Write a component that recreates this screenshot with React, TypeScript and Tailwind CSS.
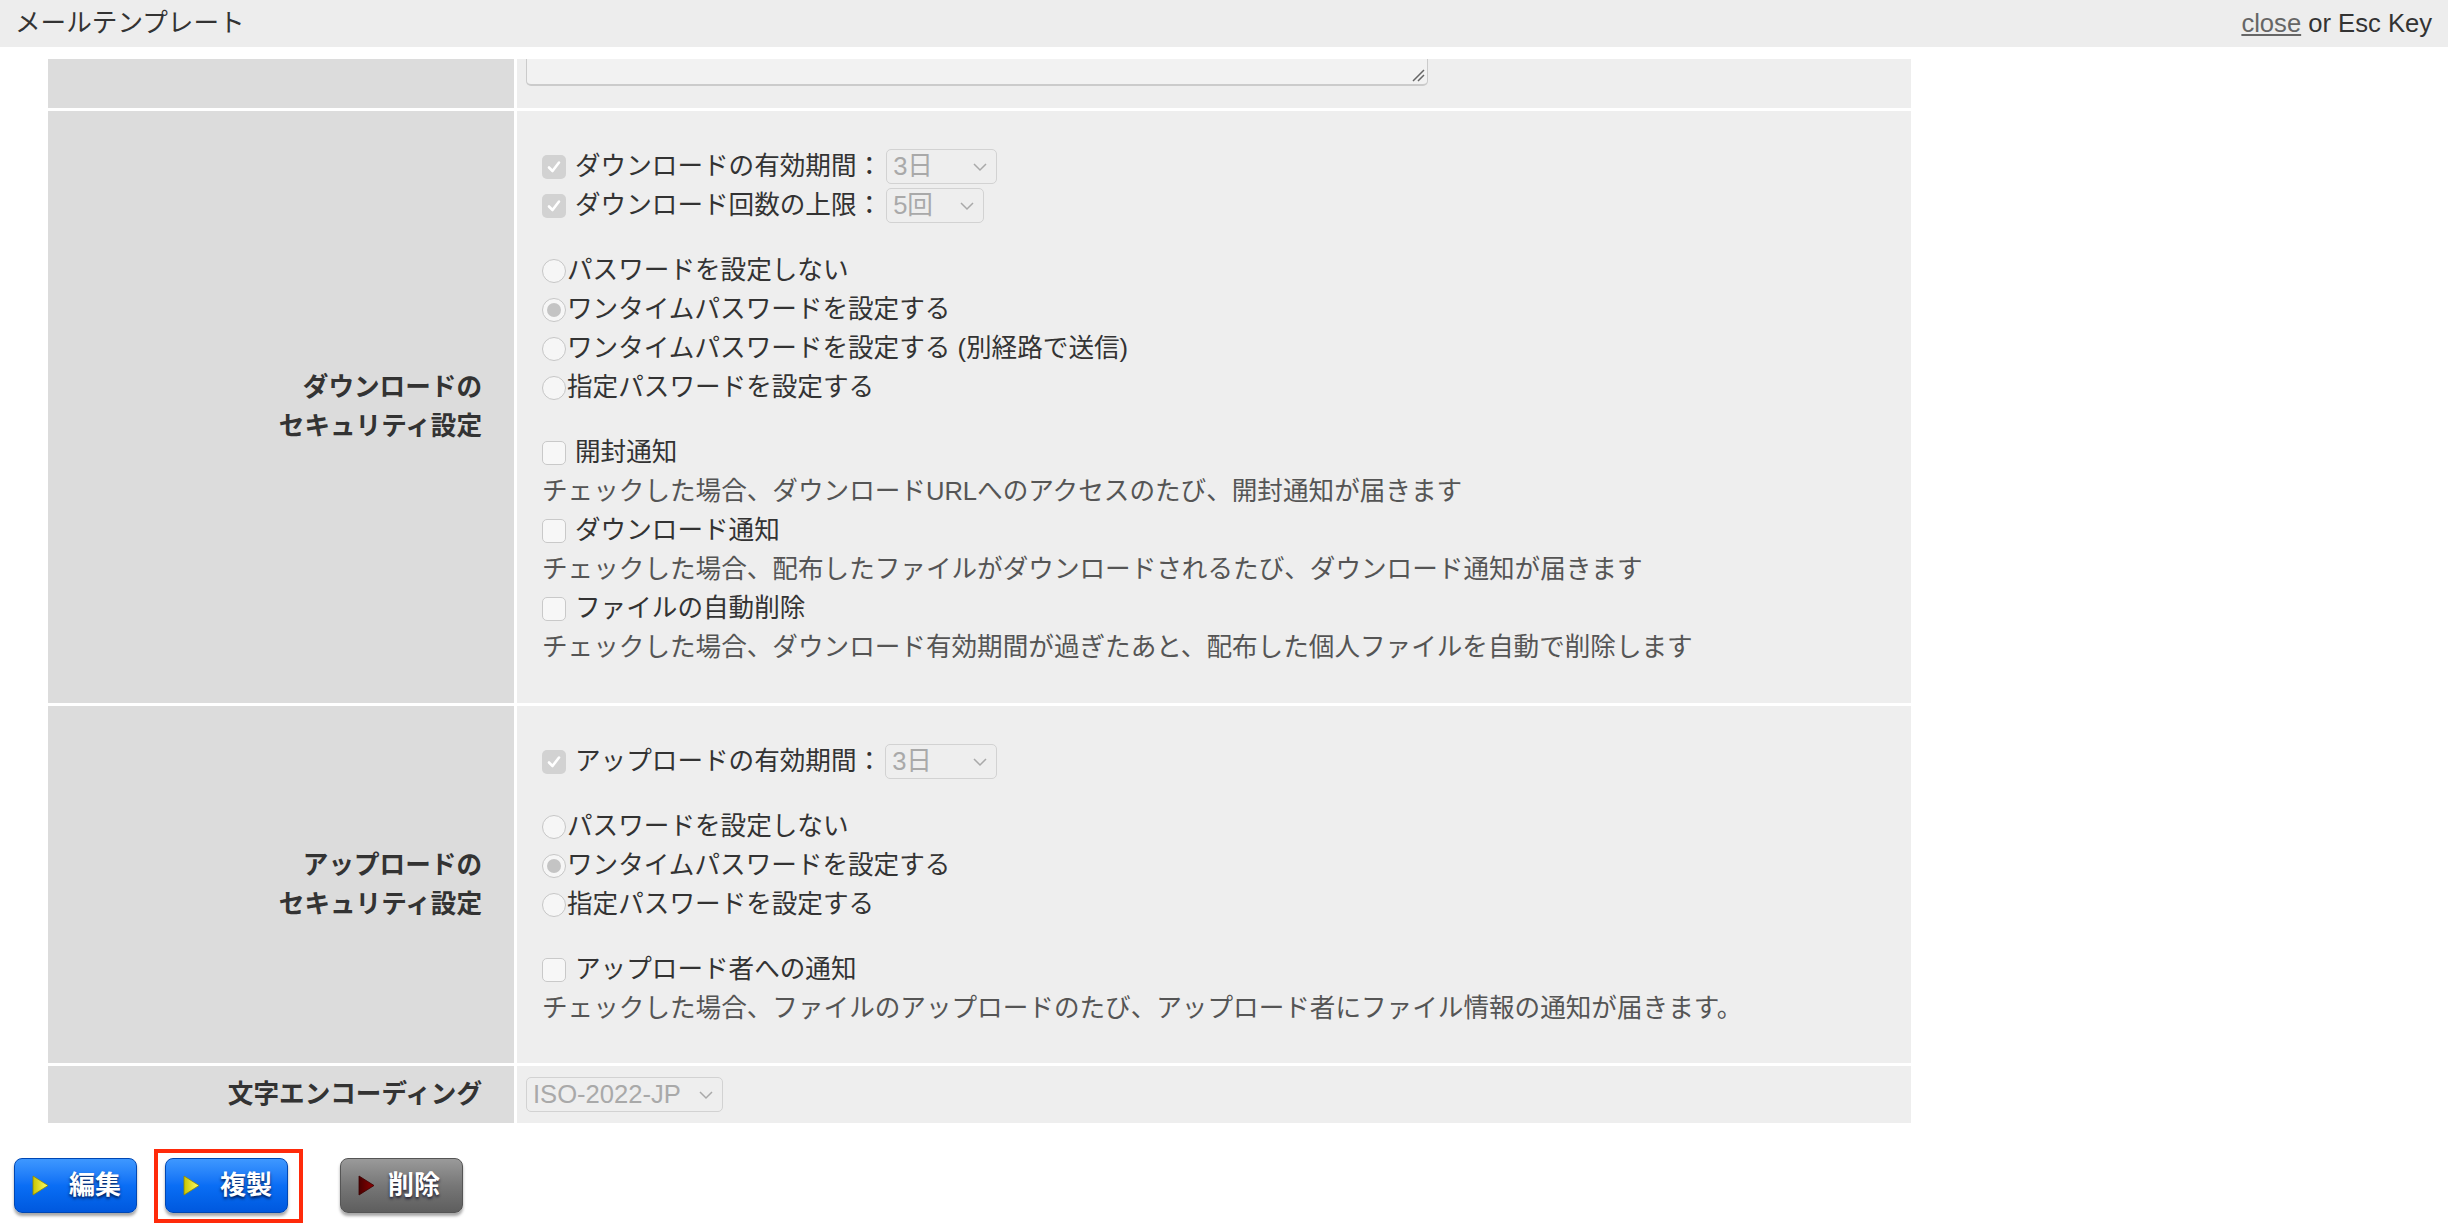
import React from 'react';

const Check = () => (
  <span className="inline-flex w-[24px] h-[24px] mr-[9px] shrink-0 items-center justify-center rounded-[5px] bg-[#d2d2d2]">
    <svg width="16" height="16" viewBox="0 0 16 16">
      <path d="M3 8.5 L6.5 12 L13 3.5" fill="none" stroke="#fff" strokeWidth="2.6" strokeLinecap="round" strokeLinejoin="round" />
    </svg>
  </span>
);

const Box = () => (
  <span className="inline-block w-[24px] h-[24px] mr-[9px] shrink-0 rounded-[5px] border-[1.5px] border-[#c9c9c9] bg-[#f7f7f7]" />
);

const Radio = ({ on }: { on?: boolean }) => (
  <span className="inline-flex w-[24px] h-[24px] mr-[1px] shrink-0 items-center justify-center rounded-full border-[1.5px] border-[#c6c6c6] bg-[#f6f6f6]">
    {on && <span className="w-[14px] h-[14px] rounded-full bg-[#c4c4c4]" />}
  </span>
);

const Select = ({ value, w }: { value: string; w: string }) => (
  <span className={`inline-flex h-[35px] items-center justify-between rounded-[5px] border-[1.5px] border-[#d2d2d2] pl-[6px] pr-[8px] text-[#a9a9a9] ${w}`}>
    <span>{value}</span>
    <svg width="16" height="10" viewBox="0 0 16 10">
      <path d="M2 2 L8 8 L14 2" fill="none" stroke="#a9a9a9" strokeWidth="1.5" />
    </svg>
  </span>
);

const Line = ({ children }: { children: React.ReactNode }) => (
  <div className="flex items-center h-[39px]">{children}</div>
);

const Desc = ({ children }: { children: React.ReactNode }) => (
  <div className="h-[39px] leading-[39px] text-[#555]">{children}</div>
);

const Label = ({ lines }: { lines: string[] }) => (
  <div className="bg-[#dcdcdc] flex flex-col items-end justify-center pr-[32px] font-bold text-[#333] leading-[39px]">
    {lines.map((l, i) => (
      <div key={i}>{l}</div>
    ))}
  </div>
);

const Triangle = ({ dark }: { dark?: boolean }) => (
  <svg width="17" height="21" viewBox="0 0 17 21" className="shrink-0">
    <defs>
      <linearGradient id={dark ? 'tr-d' : 'tr-y'} x1="0" y1="0" x2="1" y2="0">
        <stop offset="0" stopColor={dark ? '#4a0000' : '#c9c400'} />
        <stop offset="1" stopColor={dark ? '#8e0000' : '#ffff6a'} />
      </linearGradient>
    </defs>
    <polygon points="1,1 16,10.5 1,20" fill={`url(#${dark ? 'tr-d' : 'tr-y'})`} stroke={dark ? '#3a0000' : '#8f8a00'} strokeWidth="0.8" />
  </svg>
);

const Btn = ({ label, gray }: { label: string; gray?: boolean }) => (
  <button
    className={`flex items-center w-[123px] h-[55px] rounded-[8px] border pl-[17px] text-white text-[26px] font-bold shadow-[0_3px_3px_rgba(0,0,0,0.35)] [text-shadow:0_2px_3px_rgba(0,0,30,0.75)] ${
      gray
        ? 'bg-linear-to-b from-[#9a9a9a] via-[#777] to-[#5e5e5e] border-[#555]'
        : 'bg-linear-to-b from-[#3e98ff] via-[#0a6ef5] to-[#0058de] border-[#0047b3]'
    }`}
  >
    <Triangle dark={gray} />
    <span className={gray ? 'ml-[13px]' : 'ml-[20px]'}>{label}</span>
  </button>
);

export default function App() {
  return (
    <div className="min-h-screen bg-white text-[25.6px] text-[#333] font-['Liberation_Sans','Noto_Sans_CJK_JP',sans-serif]">
      <div className="h-[47px] bg-[#ededed] flex items-center justify-between pl-[15px] pr-[16px]">
        <span>メールテンプレート</span>
        <span>
          <span className="underline text-[#666]">close</span> or Esc Key
        </span>
      </div>

      <div className="pt-[12px] pl-[48px]">
        <div className="grid grid-cols-[466px_1394px] gap-[3px] w-[1863px]">
          {/* textarea row */}
          <div className="bg-[#dcdcdc] h-[49px]" />
          <div className="bg-[#eeeeee] h-[49px] pl-[9px]">
            <div className="relative w-[902px] h-[27px] bg-[#f2f2f2] border-x-[1.5px] border-b-[2px] border-[#cbcbcb] rounded-b-[5px]">
              <svg width="14" height="14" viewBox="0 0 14 14" className="absolute right-[2px] bottom-[2px]">
                <path d="M2 13 L13 2 M7 13 L13 7" stroke="#666" strokeWidth="1.5" />
              </svg>
            </div>
          </div>

          {/* download security */}
          <Label lines={['ダウンロードの', 'セキュリティ設定']} />
          <div className="bg-[#eeeeee] pl-[25px] pt-[36px] pb-[36px]">
            <Line>
              <Check />
              <span>ダウンロードの有効期間：</span>
              <Select value="3日" w="w-[111px] ml-[4px]" />
            </Line>
            <Line>
              <Check />
              <span>ダウンロード回数の上限：</span>
              <Select value="5回" w="w-[98px] ml-[4px]" />
            </Line>
            <div className="mt-[26px]">
              <Line><Radio />パスワードを設定しない</Line>
              <Line><Radio on />ワンタイムパスワードを設定する</Line>
              <Line><Radio />ワンタイムパスワードを設定する (別経路で送信)</Line>
              <Line><Radio />指定パスワードを設定する</Line>
            </div>
            <div className="mt-[26px]">
              <Line><Box />開封通知</Line>
              <Desc>チェックした場合、ダウンロードURLへのアクセスのたび、開封通知が届きます</Desc>
              <Line><Box />ダウンロード通知</Line>
              <Desc>チェックした場合、配布したファイルがダウンロードされるたび、ダウンロード通知が届きます</Desc>
              <Line><Box />ファイルの自動削除</Line>
              <Desc>チェックした場合、ダウンロード有効期間が過ぎたあと、配布した個人ファイルを自動で削除します</Desc>
            </div>
          </div>

          {/* upload security */}
          <Label lines={['アップロードの', 'セキュリティ設定']} />
          <div className="bg-[#eeeeee] pl-[25px] pt-[36px] pb-[35px]">
            <Line>
              <Check />
              <span>アップロードの有効期間：</span>
              <Select value="3日" w="w-[112px] ml-[3px]" />
            </Line>
            <div className="mt-[26px]">
              <Line><Radio />パスワードを設定しない</Line>
              <Line><Radio on />ワンタイムパスワードを設定する</Line>
              <Line><Radio />指定パスワードを設定する</Line>
            </div>
            <div className="mt-[26px]">
              <Line><Box />アップロード者への通知</Line>
              <Desc>チェックした場合、ファイルのアップロードのたび、アップロード者にファイル情報の通知が届きます。</Desc>
            </div>
          </div>

          {/* encoding */}
          <Label lines={['文字エンコーディング']} />
          <div className="bg-[#eeeeee] h-[57px] pl-[9px] flex items-center">
            <Select value="ISO-2022-JP" w="w-[197px]" />
          </div>
        </div>
      </div>

      <div className="flex items-center mt-[35px] pl-[14px]">
        <Btn label="編集" />
        <div className="relative ml-[28px]">
          <Btn label="複製" />
          <div className="absolute left-[-11px] right-[-15px] top-[-9px] bottom-[-10px] border-[4px] border-[#ff2a0a]" />
        </div>
        <div className="ml-[52px]">
          <Btn label="削除" gray />
        </div>
      </div>
    </div>
  );
}
